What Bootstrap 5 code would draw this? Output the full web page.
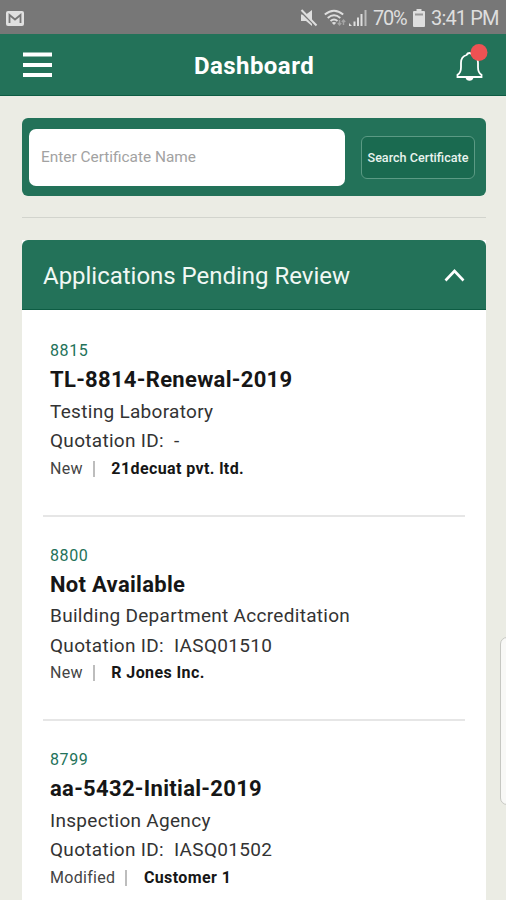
<!DOCTYPE html>
<html lang="en">
<head>
<meta charset="utf-8">
<meta name="viewport" content="width=device-width, initial-scale=1">
<title>Dashboard</title>
<link href="https://cdn.jsdelivr.net/npm/bootstrap@5.3.0/dist/css/bootstrap.min.css" rel="stylesheet">
<style>
:root{--brand:#237259}
html,body{height:900px;overflow:hidden}
body{font-family:Roboto,"Liberation Sans",sans-serif;background:#ebece4;color:#222;position:relative}
.statusbar{height:34px;background:#777;color:#dedede;font-size:20px;line-height:34px;padding:2px 7px 0 6px}
.wifi{margin-left:6px}
.signal{margin-left:3px}
.pct{margin-left:6px;width:34px;letter-spacing:-1.3px}
.batt{margin:0 6px 0 6px}
.clock{width:68px;letter-spacing:-.85px;white-space:nowrap}
.topbar{height:62px;background:var(--brand);border-bottom:1px solid #0d5c43;padding:0 18px 0 23px}
.topbar h1{font-size:24px;letter-spacing:.45px;line-height:60px;padding:3px 3px 0 0}
.topbar svg{overflow:visible}
.side-slot{width:40px}
.page-column{width:464px;margin-left:22px}
.search-panel{height:78px;background:var(--brand);border-radius:6px;margin-top:22px;padding:0 11px 0 7px}
.search-panel .form-control{height:57px;width:316px;flex:none;border-radius:7px;border:0;font-size:15.4px;padding:0 12px 1px}
.search-panel .form-control::placeholder{color:#a2a2a2;opacity:1}
.search-panel .btn{width:114px;height:43px;font-size:12.6px;font-weight:500;color:#e8f3ee;background:#1a6a50;border:1px solid #5b9a84;border-radius:6px;padding:2px 0 0;white-space:nowrap}
.rule{height:1px;background:#d2d4cd;margin:21px 0 22px}
.panel-head{height:70px;background:var(--brand);border-bottom:1px solid #0d5c43;border-radius:6px 6px 0 0;padding:3px 21px 0 21px}
.panel-head h2{font-size:24px;letter-spacing:-.02px;color:#f0f8f4}
.entry{height:204.5px;margin:0 21px;padding:31px 7px 0}
.entry + .entry{border-top:2px solid #e6e6e6;padding-top:29px}
.entry-id{font-size:16px;line-height:20px;letter-spacing:.6px;color:var(--brand)}
.entry-title{font-size:22px;line-height:30px;letter-spacing:.3px;font-weight:700;color:#161616;margin:4px 0 1.5px}
.entry-line{font-size:19px;line-height:29.5px;letter-spacing:.3px;color:#333;white-space:pre}
.entry-meta{font-size:16px;line-height:20px;margin-top:3px;color:#444;letter-spacing:.3px}
.entry-meta b{color:#161616;margin-left:16.500px;letter-spacing:.4px}
.bar{width:2px;height:16px;background:#bdbdbd;margin-left:10px}
.edge-handle{position:absolute;left:500px;top:637px;width:20px;height:168px;border:1px solid #c6c7c2;border-radius:7px;background:#f8f8f6}
</style>
</head>
<body>
<div class="statusbar d-flex align-items-center justify-content-between">
  <svg width="18" height="15" viewBox="0 0 18 15"><rect width="18" height="15" rx="2" fill="#e0e0e0"/><path d="M3.500 12V4L9 8.500 14.500 4V12" fill="none" stroke="#777" stroke-width="1.800"/></svg>
  <div class="d-flex align-items-center">
    <svg width="18" height="18" viewBox="0 0 18 18" fill="#dedede"><path d="M1 5.500h5l6-4.500v16l-6-5H1z"/><path d="M0 1.500l16 16" stroke="#777" stroke-width="2"/><path d="M1.500 1l15 15.500" stroke="#dedede" stroke-width="2"/></svg>
    <svg class="wifi" width="22" height="18" viewBox="0 0 22 18" fill="none" stroke="#dedede" stroke-width="1.900"><path d="M.8 5.500Q10 -2 19.200 5.500M3.700 9Q10 3.600 16.300 9M6.500 12Q10 9 13.500 12"/><path d="M10 16l-2.300-2.300q2.300-1.600 4.600 0z" fill="#dedede" stroke="none"/><path d="M15.500 16v-5M13.800 14l1.700 2 1.700-2M19.500 11v5M17.800 13l1.700-2 1.700 2" stroke="#a5a5a5" stroke-width="1.400"/></svg>
    <svg class="signal" width="18" height="18" viewBox="0 0 18 18" fill="#dedede"><path d="M0 17v-3l3 3z"/><path d="M4.500 12.500h2V17h-2z"/><path d="M8 8.500h2V17H8z"/><path d="M11.500 5h2v12h-2z"/><path d="M15.500 1h2v16h-2z" fill="#bbb"/></svg>
    <span class="pct">70%</span>
    <svg class="batt" width="12" height="18" viewBox="0 0 12 18"><path d="M3.500 0h5v2H11q1 0 1 1v14q0 1-1 1H1q-1 0-1-1V3q0-1 1-1h2.500z" fill="#dedede"/><path d="M2 4.500h8v2H2z" fill="#999"/></svg>
    <span class="clock">3:41 PM</span>
  </div>
</div>
<header class="topbar d-flex align-items-center justify-content-between">
  <div class="side-slot d-flex"><svg width="29" height="26" viewBox="0 0 29 26" fill="#fff"><path d="M0 .5h29v4H0zM0 11h29v4H0zM0 21h29v4H0z"/></svg></div>
  <h1 class="m-0 fw-bold text-white">Dashboard</h1>
  <div class="side-slot d-flex justify-content-end"><svg width="34" height="40" viewBox="0 0 34 40"><path d="M3.500 32v-2.300q3.500-2 3.500-7.500v-4.500q0-6 5.500-7.700 1-2 3-2t3 2q5.500 1.700 5.500 7.700v4.500q0 5.500 3.500 7.500v2.300z" fill="none" stroke="#fff" stroke-width="1.800"/><path d="M11.500 32.500h8q-.8 3.200-4 3.200t-4-3.200z" fill="#fff"/><circle cx="25" cy="7.500" r="8.500" fill="#ee5253"/></svg></div>
</header>
<main class="page-column">
  <div class="search-panel d-flex align-items-center justify-content-between">
    <input class="form-control" type="text" placeholder="Enter Certificate Name">
    <button class="btn" type="button">Search Certificate</button>
  </div>
  <div class="rule"></div>
  <section class="bg-white">
    <div class="panel-head d-flex align-items-center justify-content-between">
      <h2 class="m-0 fw-normal">Applications Pending Review</h2>
      <svg width="21" height="17" viewBox="0 0 21 17"><path d="M1.500 12.500l9-9.500 9 9.500" fill="none" stroke="#fff" stroke-width="2.600"/></svg>
    </div>
    <article class="entry">
      <div class="entry-id">8815</div>
      <h3 class="entry-title">TL-8814-Renewal-2019</h3>
      <div class="entry-line">Testing Laboratory</div>
      <div class="entry-line">Quotation ID:  -</div>
      <div class="entry-meta d-flex align-items-center">New<span class="bar"></span><b>21decuat pvt. ltd.</b></div>
    </article>
    <article class="entry">
      <div class="entry-id">8800</div>
      <h3 class="entry-title">Not Available</h3>
      <div class="entry-line">Building Department Accreditation</div>
      <div class="entry-line">Quotation ID:  IASQ01510</div>
      <div class="entry-meta d-flex align-items-center">New<span class="bar"></span><b>R Jones Inc.</b></div>
    </article>
    <article class="entry">
      <div class="entry-id">8799</div>
      <h3 class="entry-title">aa-5432-Initial-2019</h3>
      <div class="entry-line">Inspection Agency</div>
      <div class="entry-line">Quotation ID:  IASQ01502</div>
      <div class="entry-meta d-flex align-items-center">Modified<span class="bar"></span><b>Customer 1</b></div>
    </article>
  </section>
</main>
<div class="edge-handle"></div>
<script src="https://cdn.jsdelivr.net/npm/bootstrap@5.3.0/dist/js/bootstrap.bundle.min.js"></script>
</body>
</html>
